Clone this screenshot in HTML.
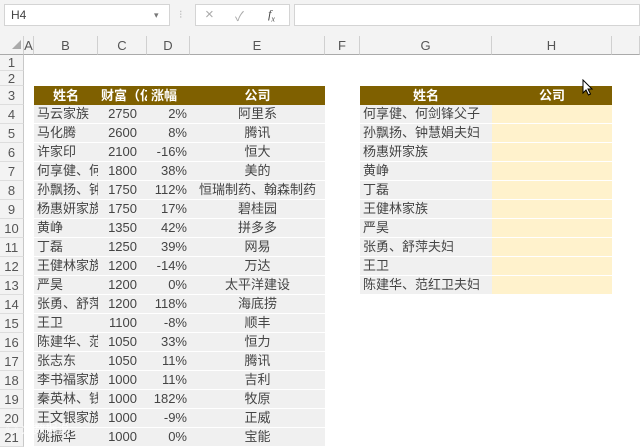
<html><head><style>
body{margin:0;width:640px;height:441px;overflow:hidden;background:#fff;font-family:"Liberation Sans","Noto Sans CJK SC",sans-serif;position:relative}
div{position:absolute;box-sizing:border-box;white-space:nowrap;overflow:hidden}
.r{left:0;width:640px;height:19px}
.rn{left:0;width:24px;height:19px;background:#f3f3f3;border-bottom:1px solid #ddd;border-right:1px solid #c8c8c8;color:#555;font-size:13px;text-align:center;line-height:20px}
.b{left:34px;width:64px;height:18px;background:#f0f0f0;color:#444;font-size:13px;line-height:18px;padding-left:3px}
.c{left:98px;width:49px;height:18px;background:#f0f0f0;color:#444;font-size:13px;line-height:18px;text-align:right;padding-right:10px}
.d{left:147px;width:43px;height:18px;background:#f0f0f0;color:#444;font-size:13px;line-height:18px;text-align:right;padding-right:3px}
.e{left:190px;width:135px;height:18px;background:#f0f0f0;color:#444;font-size:13px;line-height:18px;text-align:center}
.g{left:360px;width:132px;height:18px;background:#f0f0f0;color:#444;font-size:13px;line-height:18px;padding-left:3px}
.h{left:492px;width:120px;height:18px;background:#fff2cc}
.ch{top:36px;height:19px;background:#f3f3f3;border-right:1px solid #d0d0d0;border-bottom:1px solid #aaa;color:#555;font-size:13px;text-align:center;line-height:19px}
.hd{height:19px;background:#7f6000;color:#fff;font-weight:bold;font-size:13px;line-height:19px;text-align:center}
</style></head><body>
<div style="left:0;top:0;width:640px;height:36px;background:#f3f3f3"></div>
<div style="left:4px;top:4px;width:166px;height:22px;background:#fff;border:1px solid #d4d4d4;font-size:12px;color:#444;line-height:21px;padding-left:6px">H4</div>
<div style="left:154px;top:10px;font-size:9px;color:#777">▾</div>
<div style="left:179px;top:8px;font-size:11px;color:#bbb">⁝</div>
<div style="left:195px;top:4px;width:95px;height:22px;background:#fff;border:1px solid #d4d4d4"></div>
<div style="left:205px;top:6px;font-size:15px;color:#aaa">×</div>
<div style="left:235px;top:6px;font-size:13px;color:#aaa">✓</div>
<div style="left:268px;top:7px;font-size:12px;color:#444;font-style:italic;font-family:'Liberation Serif',serif">f<sub style="font-size:8px">x</sub></div>
<div style="left:294px;top:4px;width:346px;height:22px;background:#fff;border:1px solid #d4d4d4"></div>
<div class="ch" style="left:0;width:24px;color:#aaa;font-size:9px;text-align:right;padding-right:2px">◢</div>
<div class="ch" style="left:24px;width:10px">A</div>
<div class="ch" style="left:34px;width:64px">B</div>
<div class="ch" style="left:98px;width:49px">C</div>
<div class="ch" style="left:147px;width:43px">D</div>
<div class="ch" style="left:190px;width:135px">E</div>
<div class="ch" style="left:325px;width:35px">F</div>
<div class="ch" style="left:360px;width:132px">G</div>
<div class="ch" style="left:492px;width:120px">H</div>
<div class="ch" style="left:612px;width:28px"></div>
<div class="rn" style="top:55px;height:16px;line-height:16px">1</div>
<div class="rn" style="top:71px;height:15px;line-height:15px">2</div>
<div class="rn" style="top:86px">3</div>
<div class="hd" style="left:34px;top:86px;width:64px">姓名</div>
<div class="hd" style="left:98px;top:86px;width:49px;text-align:left;padding-left:3px">财富（亿</div>
<div class="hd" style="left:147px;top:86px;width:43px;text-align:left;padding-left:4px">涨幅</div>
<div class="hd" style="left:190px;top:86px;width:135px">公司</div>
<div class="hd" style="left:360px;top:86px;width:132px">姓名</div>
<div class="hd" style="left:492px;top:86px;width:120px">公司</div>

<div class="rn" style="top:105px">4</div><div class="b" style="top:105px">马云家族</div><div class="c" style="top:105px">2750</div><div class="d" style="top:105px">2%</div><div class="e" style="top:105px">阿里系</div><div class="g" style="top:105px">何享健、何剑锋父子</div><div class="h" style="top:105px"></div>
<div class="rn" style="top:124px">5</div><div class="b" style="top:124px">马化腾</div><div class="c" style="top:124px">2600</div><div class="d" style="top:124px">8%</div><div class="e" style="top:124px">腾讯</div><div class="g" style="top:124px">孙飘扬、钟慧娟夫妇</div><div class="h" style="top:124px"></div>
<div class="rn" style="top:143px">6</div><div class="b" style="top:143px">许家印</div><div class="c" style="top:143px">2100</div><div class="d" style="top:143px">-16%</div><div class="e" style="top:143px">恒大</div><div class="g" style="top:143px">杨惠妍家族</div><div class="h" style="top:143px"></div>
<div class="rn" style="top:162px">7</div><div class="b" style="top:162px">何享健、何剑锋父子</div><div class="c" style="top:162px">1800</div><div class="d" style="top:162px">38%</div><div class="e" style="top:162px">美的</div><div class="g" style="top:162px">黄峥</div><div class="h" style="top:162px"></div>
<div class="rn" style="top:181px">8</div><div class="b" style="top:181px">孙飘扬、钟慧娟夫妇</div><div class="c" style="top:181px">1750</div><div class="d" style="top:181px">112%</div><div class="e" style="top:181px">恒瑞制药、翰森制药</div><div class="g" style="top:181px">丁磊</div><div class="h" style="top:181px"></div>
<div class="rn" style="top:200px">9</div><div class="b" style="top:200px">杨惠妍家族</div><div class="c" style="top:200px">1750</div><div class="d" style="top:200px">17%</div><div class="e" style="top:200px">碧桂园</div><div class="g" style="top:200px">王健林家族</div><div class="h" style="top:200px"></div>
<div class="rn" style="top:219px">10</div><div class="b" style="top:219px">黄峥</div><div class="c" style="top:219px">1350</div><div class="d" style="top:219px">42%</div><div class="e" style="top:219px">拼多多</div><div class="g" style="top:219px">严昊</div><div class="h" style="top:219px"></div>
<div class="rn" style="top:238px">11</div><div class="b" style="top:238px">丁磊</div><div class="c" style="top:238px">1250</div><div class="d" style="top:238px">39%</div><div class="e" style="top:238px">网易</div><div class="g" style="top:238px">张勇、舒萍夫妇</div><div class="h" style="top:238px"></div>
<div class="rn" style="top:257px">12</div><div class="b" style="top:257px">王健林家族</div><div class="c" style="top:257px">1200</div><div class="d" style="top:257px">-14%</div><div class="e" style="top:257px">万达</div><div class="g" style="top:257px">王卫</div><div class="h" style="top:257px"></div>
<div class="rn" style="top:276px">13</div><div class="b" style="top:276px">严昊</div><div class="c" style="top:276px">1200</div><div class="d" style="top:276px">0%</div><div class="e" style="top:276px">太平洋建设</div><div class="g" style="top:276px">陈建华、范红卫夫妇</div><div class="h" style="top:276px"></div>
<div class="rn" style="top:295px">14</div><div class="b" style="top:295px">张勇、舒萍夫妇</div><div class="c" style="top:295px">1200</div><div class="d" style="top:295px">118%</div><div class="e" style="top:295px">海底捞</div>
<div class="rn" style="top:314px">15</div><div class="b" style="top:314px">王卫</div><div class="c" style="top:314px">1100</div><div class="d" style="top:314px">-8%</div><div class="e" style="top:314px">顺丰</div>
<div class="rn" style="top:333px">16</div><div class="b" style="top:333px">陈建华、范红卫夫妇</div><div class="c" style="top:333px">1050</div><div class="d" style="top:333px">33%</div><div class="e" style="top:333px">恒力</div>
<div class="rn" style="top:352px">17</div><div class="b" style="top:352px">张志东</div><div class="c" style="top:352px">1050</div><div class="d" style="top:352px">11%</div><div class="e" style="top:352px">腾讯</div>
<div class="rn" style="top:371px">18</div><div class="b" style="top:371px">李书福家族</div><div class="c" style="top:371px">1000</div><div class="d" style="top:371px">11%</div><div class="e" style="top:371px">吉利</div>
<div class="rn" style="top:390px">19</div><div class="b" style="top:390px">秦英林、钱瑛夫妇</div><div class="c" style="top:390px">1000</div><div class="d" style="top:390px">182%</div><div class="e" style="top:390px">牧原</div>
<div class="rn" style="top:409px">20</div><div class="b" style="top:409px">王文银家族</div><div class="c" style="top:409px">1000</div><div class="d" style="top:409px">-9%</div><div class="e" style="top:409px">正威</div>
<div class="rn" style="top:428px">21</div><div class="b" style="top:428px">姚振华</div><div class="c" style="top:428px">1000</div><div class="d" style="top:428px">0%</div><div class="e" style="top:428px">宝能</div>
<div style="left:6px;top:420px;font-size:12px;color:#fff;opacity:.85">◎ 大数据说</div>
<svg style="position:absolute;left:582px;top:79px" width="12" height="18" viewBox="0 0 12 18"><path d="M1 1 L1 14 L4 11 L6.5 16 L8.5 15 L6 10 L10 10 Z" fill="#fff" stroke="#000" stroke-width="1"/></svg>
</body></html>
